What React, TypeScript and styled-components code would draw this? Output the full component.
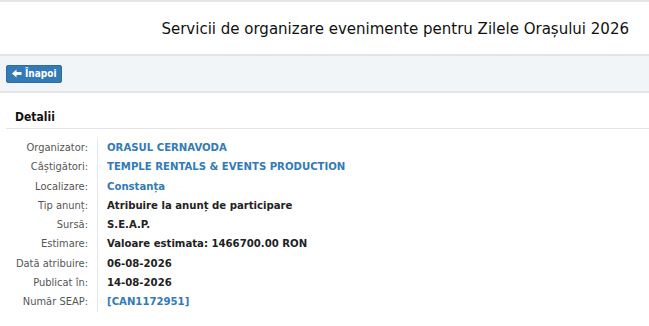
import { Fragment } from 'react';
import styled, { createGlobalStyle } from 'styled-components';

const GlobalStyle = createGlobalStyle`
    body {
        margin: 0;
        background: #fff;
        font-family: Tahoma, "DejaVu Sans Condensed", "DejaVu Sans", sans-serif;
        color: #333;
    }
`;

const Page = styled.div`
    width: 649px;
    border-top: 2px solid #e3e5e8;
`;

const TitleBar = styled.header`
    height: 52px;
    display: flex;
    align-items: center;
    justify-content: flex-end;
    padding-right: 20px;
    border-bottom: 2px solid #e2e4e7;
`;

const Title = styled.h1`
    margin: 0;
    font-size: 16.7px;
    font-weight: normal;
    color: #111;
`;

const Toolbar = styled.div`
    height: 35px;
    background: #f2f5f8;
    display: flex;
    align-items: center;
    padding-left: 6px;
    border-bottom: 2px solid #e2e4e7;
`;

const BackButton = styled.button`
    display: flex;
    align-items: center;
    gap: 3px;
    height: 18px;
    padding: 0 4px 0 5px;
    border: 1px solid #2e6da4;
    border-radius: 2px;
    background: #337ab7;
    color: #fff;
    font-family: inherit;
    font-size: 10px;
    font-weight: bold;
    cursor: pointer;
`;

const Section = styled.section`
    padding: 0 0 0 6px;
`;

const SectionTitle = styled.h2`
    margin: 0;
    padding: 17px 0 4px 9px;
    font-size: 12px;
    font-weight: bold;
    color: #111;
    border-bottom: 1px solid #e2e4e7;
`;

// label / value pairs, divided by a thin rule
const Details = styled.dl`
    display: grid;
    grid-template-columns: 91px 1fr;
    margin: 9px 0 0;
`;

const Label = styled.dt`
    text-align: right;
    padding-right: 9px;
    font-size: 11px;
    line-height: 19.3px;
    color: #555;
`;

const Value = styled.dd<{ $link?: boolean }>`
    margin: 0;
    padding-left: 9px;
    border-left: 1px solid #e6e8eb;
    font-size: 11.25px;
    line-height: 19.3px;
    font-weight: bold;
    color: ${(p) => (p.$link ? '#337ab7' : '#222')};
`;

type Row = { label: string; value: string; link?: boolean };

const rows: Row[] = [
    { label: 'Organizator:', value: 'ORASUL CERNAVODA', link: true },
    { label: 'Câștigători:', value: 'TEMPLE RENTALS & EVENTS PRODUCTION', link: true },
    { label: 'Localizare:', value: 'Constanța', link: true },
    { label: 'Tip anunț:', value: 'Atribuire la anunț de participare' },
    { label: 'Sursă:', value: 'S.E.A.P.' },
    { label: 'Estimare:', value: 'Valoare estimata: 1466700.00 RON' },
    { label: 'Dată atribuire:', value: '06-08-2026' },
    { label: 'Publicat în:', value: '14-08-2026' },
    { label: 'Număr SEAP:', value: '[CAN1172951]', link: true },
];

const ArrowLeft = () => (
    <svg width="10" height="9" viewBox="0 0 10 9">
        <path d="M0 4.5 L4.5 0.5 V3 H9.5 V6 H4.5 V8.5 Z" fill="#fff" />
    </svg>
);

export default function App() {
    return (
        <>
            <GlobalStyle />
            <Page>
                <TitleBar>
                    <Title>Servicii de organizare evenimente pentru Zilele Orașului 2026</Title>
                </TitleBar>
                <Toolbar>
                    <BackButton>
                        <ArrowLeft />
                        Înapoi
                    </BackButton>
                </Toolbar>
                <Section>
                    <SectionTitle>Detalii</SectionTitle>
                    <Details>
                        {rows.map((r) => (
                            <Fragment key={r.label}>
                                <Label>{r.label}</Label>
                                <Value $link={r.link}>{r.value}</Value>
                            </Fragment>
                        ))}
                    </Details>
                </Section>
            </Page>
        </>
    );
}
